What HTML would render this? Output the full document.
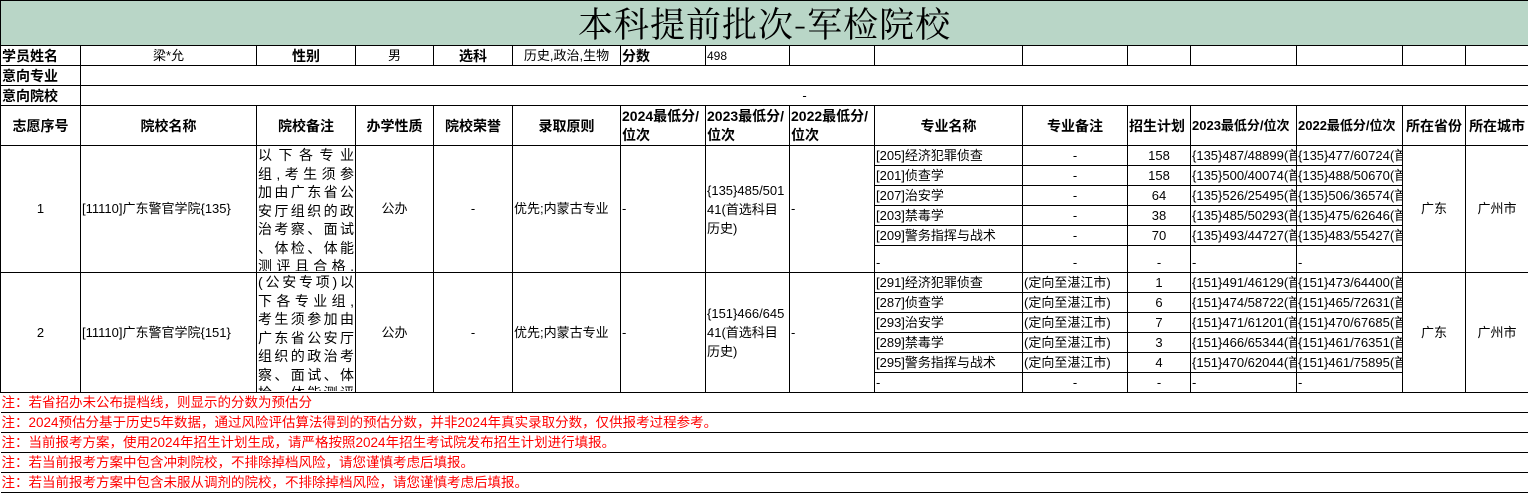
<!DOCTYPE html>
<html><head><meta charset="utf-8">
<style>
*{margin:0;padding:0;box-sizing:border-box}
body{width:1528px;height:494px;overflow:hidden;background:#fff;font-family:"Liberation Sans","Noto Sans CJK SC",sans-serif;font-size:13px;color:#000}
table{border-collapse:collapse;table-layout:fixed;width:1528px}
td{border:1px solid #000;padding:0 1px;white-space:nowrap;overflow:hidden;text-align:center;vertical-align:middle;line-height:18px;height:20px}
.t{background:#b9d6c7;height:45px;font-family:"Noto Serif CJK SC","Liberation Serif",serif;font-size:35px;line-height:44px;letter-spacing:1px}
.b{font-weight:bold;font-size:14px}
.l{text-align:left}
.h td{height:40px;font-weight:bold;font-size:14px}
.w{white-space:normal;text-align:left;line-height:19px;word-break:break-all}
.rm{font-size:14px;line-height:18.5px;padding:0 1px;vertical-align:top}
.rm div.c{overflow:hidden}
.rm p{text-align:justify;text-align-last:justify;white-space:nowrap;height:18.5px}
.n td{text-align:left;color:#f00;font-size:13.5px;height:20px;border-left:none;border-right:none}
</style></head><body>
<table>
<colgroup>
<col style="width:80px"><col style="width:176px"><col style="width:99px"><col style="width:78px"><col style="width:79px"><col style="width:108px"><col style="width:85px"><col style="width:84px"><col style="width:85px"><col style="width:148px"><col style="width:105px"><col style="width:63px"><col style="width:106px"><col style="width:106px"><col style="width:63px"><col style="width:63px">
</colgroup>
<tr><td class="t" colspan="16">本科提前批次-军检院校</td></tr>
<tr><td class="b l">学员姓名</td><td>梁*允</td><td class="b">性别</td><td>男</td><td class="b">选科</td><td>历史,政治,生物</td><td class="b l">分数</td><td class="l" style="font-size:12px">498</td><td></td><td></td><td></td><td></td><td></td><td></td><td></td><td></td></tr>
<tr><td class="b l">意向专业</td><td colspan="15"></td></tr>
<tr><td class="b l">意向院校</td><td colspan="15">-</td></tr>
<tr class="h"><td>志愿序号</td><td>院校名称</td><td>院校备注</td><td>办学性质</td><td>院校荣誉</td><td>录取原则</td><td class="w">2024最低分/位次</td><td class="w">2023最低分/位次</td><td class="w">2022最低分/位次</td><td>专业名称</td><td>专业备注</td><td style="text-align:left">招生计划</td><td style="text-align:left;font-size:13px">2023最低分/位次</td><td style="text-align:left;font-size:13px">2022最低分/位次</td><td>所在省份</td><td>所在城市</td></tr>

<tr><td rowspan="6">1</td><td rowspan="6" class="l">[11110]广东警官学院{135}</td><td rowspan="6" class="rm"><div class="c" style="height:125px"><p>以下各专业</p><p>组,考生须参</p><p>加由广东省公</p><p>安厅组织的政</p><p>治考察、面试</p><p>、体检、体能</p><p>测评且合格,</p></div></td><td rowspan="6">公办</td><td rowspan="6">-</td><td rowspan="6" class="l">优先;内蒙古专业</td><td rowspan="6" class="l">-</td><td rowspan="6" class="w">{135}485/50141(首选科目历史)</td><td rowspan="6" class="l">-</td>
<td class="l">[205]经济犯罪侦查</td><td>-</td><td>158</td><td class="l">{135}487/48899(首</td><td class="l">{135}477/60724(首</td><td rowspan="6">广东</td><td rowspan="6">广州市</td></tr>
<tr><td class="l">[201]侦查学</td><td>-</td><td>158</td><td class="l">{135}500/40074(首</td><td class="l">{135}488/50670(首</td></tr>
<tr><td class="l">[207]治安学</td><td>-</td><td>64</td><td class="l">{135}526/25495(首</td><td class="l">{135}506/36574(首</td></tr>
<tr><td class="l">[203]禁毒学</td><td>-</td><td>38</td><td class="l">{135}485/50293(首</td><td class="l">{135}475/62646(首</td></tr>
<tr><td class="l">[209]警务指挥与战术</td><td>-</td><td>70</td><td class="l">{135}493/44727(首</td><td class="l">{135}483/55427(首</td></tr>
<tr><td class="l" style="height:27px;vertical-align:bottom">-</td><td style="vertical-align:bottom">-</td><td style="vertical-align:bottom">-</td><td class="l" style="vertical-align:bottom">-</td><td class="l" style="vertical-align:bottom">-</td></tr>

<tr><td rowspan="6">2</td><td rowspan="6" class="l">[11110]广东警官学院{151}</td><td rowspan="6" class="rm"><div class="c" style="height:118px"><p>(公安专项)以</p><p>下各专业组,</p><p>考生须参加由</p><p>广东省公安厅</p><p>组织的政治考</p><p>察、面试、体</p><p>检、体能测评</p></div></td><td rowspan="6">公办</td><td rowspan="6">-</td><td rowspan="6" class="l">优先;内蒙古专业</td><td rowspan="6" class="l">-</td><td rowspan="6" class="w">{151}466/64541(首选科目历史)</td><td rowspan="6" class="l">-</td>
<td class="l">[291]经济犯罪侦查</td><td class="l">(定向至湛江市)</td><td>1</td><td class="l">{151}491/46129(首</td><td class="l">{151}473/64400(首</td><td rowspan="6">广东</td><td rowspan="6">广州市</td></tr>
<tr><td class="l">[287]侦查学</td><td class="l">(定向至湛江市)</td><td>6</td><td class="l">{151}474/58722(首</td><td class="l">{151}465/72631(首</td></tr>
<tr><td class="l">[293]治安学</td><td class="l">(定向至湛江市)</td><td>7</td><td class="l">{151}471/61201(首</td><td class="l">{151}470/67685(首</td></tr>
<tr><td class="l">[289]禁毒学</td><td class="l">(定向至湛江市)</td><td>3</td><td class="l">{151}466/65344(首</td><td class="l">{151}461/76351(首</td></tr>
<tr><td class="l">[295]警务指挥与战术</td><td class="l">(定向至湛江市)</td><td>4</td><td class="l">{151}470/62044(首</td><td class="l">{151}461/75895(首</td></tr>
<tr><td class="l">-</td><td>-</td><td>-</td><td class="l">-</td><td class="l">-</td></tr>

<tr class="n"><td colspan="16">注：若省招办未公布提档线，则显示的分数为预估分</td></tr>
<tr class="n"><td colspan="16">注：2024预估分基于历史5年数据，通过风险评估算法得到的预估分数，并非2024年真实录取分数，仅供报考过程参考。</td></tr>
<tr class="n"><td colspan="16">注：当前报考方案，使用2024年招生计划生成，请严格按照2024年招生考试院发布招生计划进行填报。</td></tr>
<tr class="n"><td colspan="16">注：若当前报考方案中包含冲刺院校，不排除掉档风险，请您谨慎考虑后填报。</td></tr>
<tr class="n"><td colspan="16">注：若当前报考方案中包含未服从调剂的院校，不排除掉档风险，请您谨慎考虑后填报。</td></tr>
</table>
</body></html>
